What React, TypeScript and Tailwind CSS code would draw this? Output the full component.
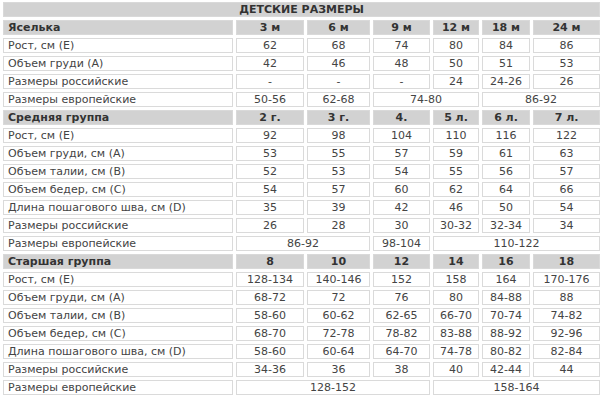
import React from "react";

type Cell = { text: string; span?: number };
type Row = { label: string; cells: Cell[] };
type Group = { title: string; heads: string[]; rows: Row[] };

const c = (...vals: string[]): Cell[] => vals.map((text) => ({ text }));

const groups: Group[] = [
  {
    title: "Яселька",
    heads: ["3 м", "6 м", "9 м", "12 м", "18 м", "24 м"],
    rows: [
      { label: "Рост, см (E)", cells: c("62", "68", "74", "80", "84", "86") },
      { label: "Объем груди (A)", cells: c("42", "46", "48", "50", "51", "53") },
      { label: "Размеры российские", cells: c("-", "-", "-", "24", "24-26", "26") },
      {
        label: "Размеры европейские",
        cells: [
          { text: "50-56" },
          { text: "62-68" },
          { text: "74-80", span: 2 },
          { text: "86-92", span: 2 },
        ],
      },
    ],
  },
  {
    title: "Средняя группа",
    heads: ["2 г.", "3 г.", "4.", "5 л.", "6 л.", "7 л."],
    rows: [
      { label: "Рост, см (E)", cells: c("92", "98", "104", "110", "116", "122") },
      { label: "Объем груди, см (A)", cells: c("53", "55", "57", "59", "61", "63") },
      { label: "Объем талии, см (B)", cells: c("52", "53", "54", "55", "56", "57") },
      { label: "Объем бедер, см (C)", cells: c("54", "57", "60", "62", "64", "66") },
      { label: "Длина пошагового шва, см (D)", cells: c("35", "39", "42", "46", "50", "54") },
      { label: "Размеры российские", cells: c("26", "28", "30", "30-32", "32-34", "34") },
      {
        label: "Размеры европейские",
        cells: [
          { text: "86-92", span: 2 },
          { text: "98-104" },
          { text: "110-122", span: 3 },
        ],
      },
    ],
  },
  {
    title: "Старшая группа",
    heads: ["8", "10", "12", "14", "16", "18"],
    rows: [
      { label: "Рост, см (E)", cells: c("128-134", "140-146", "152", "158", "164", "170-176") },
      { label: "Объем груди, см (A)", cells: c("68-72", "72", "76", "80", "84-88", "88") },
      { label: "Объем талии, см (B)", cells: c("58-60", "60-62", "62-65", "66-70", "70-74", "74-82") },
      { label: "Объем бедер, см (C)", cells: c("68-70", "72-78", "78-82", "83-88", "88-92", "92-96") },
      { label: "Длина пошагового шва, см (D)", cells: c("58-60", "60-64", "64-70", "74-78", "80-82", "82-84") },
      { label: "Размеры российские", cells: c("34-36", "36", "38", "40", "42-44", "44") },
      {
        label: "Размеры европейские",
        cells: [
          { text: "128-152", span: 3 },
          { text: "158-164", span: 3 },
        ],
      },
    ],
  },
];

const td = "border border-[#dadada] bg-white p-0 h-[15px] leading-[13px] text-[11px] text-[#444] whitespace-nowrap";
const th = "border border-[#d9d9d9] bg-[#d2d2d2] p-0 h-[15px] leading-[13px] text-[11px] font-bold text-[#333] whitespace-nowrap";

export default function App() {
  return (
    <div className="w-[614px] h-[405px] bg-white overflow-hidden" style={{ fontFamily: '"DejaVu Sans", Verdana, sans-serif' }}>
      <table className="table-fixed border-separate border-spacing-[3px] w-[603px] -mt-px">
        <colgroup>
          <col className="w-[230px]" />
          <col className="w-[68px]" />
          <col className="w-[63px]" />
          <col className="w-[57px]" />
          <col className="w-[46px]" />
          <col className="w-[48px]" />
          <col className="w-[67px]" />
        </colgroup>
        <tbody>
          <tr>
            <td colSpan={7} className={`${th} text-center`}>
              ДЕТСКИЕ РАЗМЕРЫ
            </td>
          </tr>
          {groups.map((g) => (
            <React.Fragment key={g.title}>
              <tr>
                <td className={`${th} text-left pl-[4px]`}>{g.title}</td>
                {g.heads.map((h) => (
                  <td key={h} className={`${th} text-center`}>
                    {h}
                  </td>
                ))}
              </tr>
              {g.rows.map((r, i) => (
                <tr key={i}>
                  <td className={`${td} text-left pl-[4px]`}>{r.label}</td>
                  {r.cells.map((cell, j) => (
                    <td key={j} colSpan={cell.span ?? 1} className={`${td} text-center`}>
                      {cell.text}
                    </td>
                  ))}
                </tr>
              ))}
            </React.Fragment>
          ))}
        </tbody>
      </table>
    </div>
  );
}
